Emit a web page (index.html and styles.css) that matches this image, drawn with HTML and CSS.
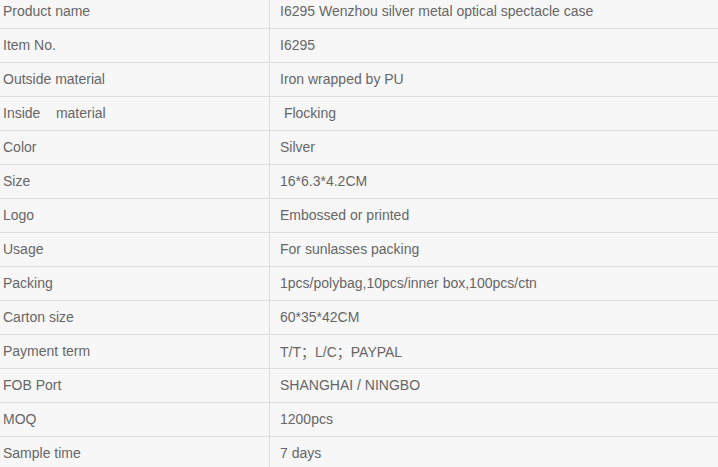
FILE: index.html
```html
<!DOCTYPE html>
<html>
<head>
<meta charset="utf-8">
<link rel="stylesheet" href="styles.css">
</head>
<body>
<table class="spec">
<tr><td class="k">Product name</td><td class="v">I6295 Wenzhou silver metal optical spectacle case</td></tr>
<tr><td class="k">Item No.</td><td class="v">I6295</td></tr>
<tr><td class="k">Outside material</td><td class="v">Iron wrapped by PU</td></tr>
<tr><td class="k">Inside &nbsp;&nbsp;&nbsp;material</td><td class="v">&nbsp;Flocking</td></tr>
<tr><td class="k">Color</td><td class="v">Silver</td></tr>
<tr><td class="k">Size</td><td class="v">16*6.3*4.2CM</td></tr>
<tr><td class="k">Logo</td><td class="v">Embossed or printed</td></tr>
<tr><td class="k">Usage</td><td class="v">For sunlasses packing</td></tr>
<tr><td class="k">Packing</td><td class="v">1pcs/polybag,10pcs/inner box,100pcs/ctn</td></tr>
<tr><td class="k">Carton size</td><td class="v">60*35*42CM</td></tr>
<tr><td class="k">Payment term</td><td class="v">T/T；L/C；PAYPAL</td></tr>
<tr><td class="k">FOB Port</td><td class="v">SHANGHAI / NINGBO</td></tr>
<tr><td class="k">MOQ</td><td class="v">1200pcs</td></tr>
<tr><td class="k">Sample time</td><td class="v">7 days</td></tr>
</table>
</body>
</html>
```
FILE: styles.css
```css
html, body {
  margin: 0;
  padding: 0;
  background: #f7f7f7;
  overflow: hidden;
}
.spec {
  border-collapse: collapse;
  margin-top: -5px;
  width: 730px;
  font-family: "Liberation Sans", Arial, "Noto Sans CJK SC", sans-serif;
  font-size: 14px;
  color: #666;
  background: #f7f7f7;
}
.spec td {
  height: 31px;
  padding: 0 0 2px 0;
  border-top: 1px solid #ddd;
  border-bottom: 1px solid #ddd;
  vertical-align: middle;
  white-space: nowrap;
  box-sizing: content-box;
}
.spec tr:first-child td {
  border-top: none;
}
.spec .k {
  width: 266px;
  padding-left: 3px;
  border-right: 1px solid #ddd;
}
.spec .v {
  padding-left: 10px;
}
```
